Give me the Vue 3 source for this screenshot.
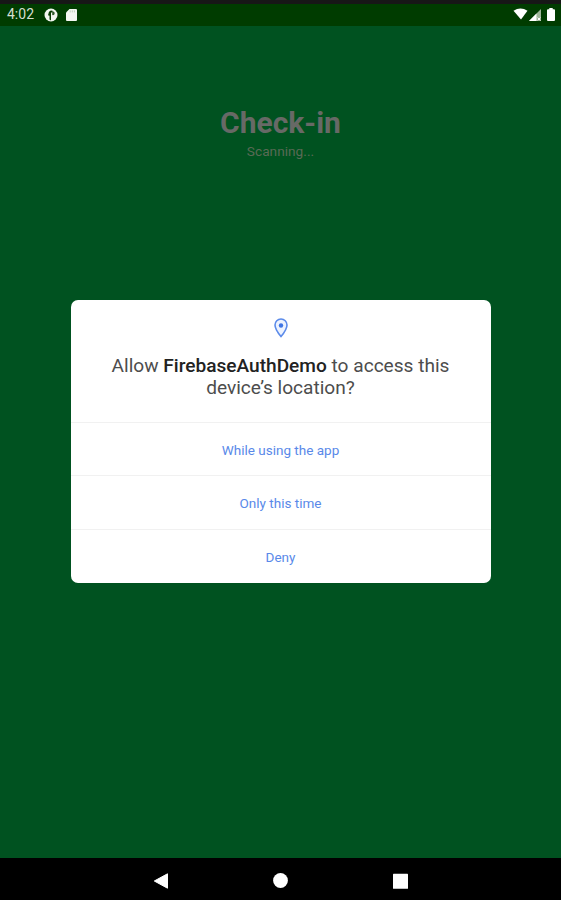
<template>
  <div class="screen">
    <header class="status-bar">
      <div class="status-left">
        <span class="clock">4:02</span>
        <svg class="app-icon" width="14" height="14" viewBox="0 0 14 14">
          <circle cx="7" cy="7" r="6.5" fill="#f4f7f2" />
          <path d="M6.8 2.6 5 3.8 4 7.200l1.500.6v3.800l1.500.8V4.600h1.600V2.800z" fill="#0b3d05" />
          <path d="M8.200 3.400h1.200q1.500.4 1.300 2T9 7.200l-.8-.3z" fill="#33592d" />
        </svg>
        <svg width="11" height="12" viewBox="0 0 11 12">
          <path d="M3.500 0H10q1 0 1 1v10q0 1-1 1H1q-1 0-1-1V3.500z" fill="#f4f7f2" />
          <path d="M4.200 1.400v2M6.300 1.400v2M8.400 1.400v2" stroke="#b5c6b0" stroke-width=".8" />
        </svg>
      </div>
      <div class="status-right">
        <svg width="15" height="12" viewBox="0 0 15 12">
          <path d="M.5 2.700Q7.500-1.700 14.500 2.700L8 11.500z" fill="#fff" />
        </svg>
        <svg class="signal" width="12" height="12" viewBox="0 0 12 12">
          <path d="M12 0v12H0z" fill="#9fb59a" />
          <path d="M7.500 4.500V12H0z" fill="#fff" />
          <path d="m8.700 8.600 2.600 2.800m0-2.800-2.600 2.800" stroke="#fff" />
        </svg>
        <svg width="8" height="13" viewBox="0 0 8 13">
          <path d="M2.300 0h3.400v1.300H7q1 0 1 1V12q0 1-1 1H1q-1 0-1-1V2.300q0-1 1-1h1.300z" fill="#fff" />
        </svg>
      </div>
    </header>

    <main class="content">
      <h1>Check-in</h1>
      <p class="scanning">Scanning...</p>

      <section class="dialog" role="dialog">
        <div class="dialog-head">
          <svg class="pin" width="14" height="20" viewBox="0 0 14 20">
            <path
              d="M7 1a6 6 0 0 0-6 6c0 4.300 6 11.600 6 11.600S13 11.300 13 7a6 6 0 0 0-6-6z"
              fill="#edf3ff"
              stroke="#5c8bea"
              stroke-width="1.600"
            />
            <circle cx="7" cy="7.500" r="2.200" fill="#3f75e4" />
          </svg>
          <h2>
            Allow <b>{{ appName }}</b> to access this<br />device’s location?
          </h2>
        </div>
        <button v-for="option in options" :key="option" type="button">{{ option }}</button>
      </section>
    </main>

    <nav class="nav-bar">
      <svg width="15" height="16" viewBox="0 0 15 16">
        <path d="M14.500.8v14.400L1.300 8z" fill="#fff" stroke="#fff" stroke-linejoin="round" />
      </svg>
      <svg width="15" height="16" viewBox="0 0 15 16">
        <circle cx="7.500" cy="7.500" r="7.400" fill="#fff" />
      </svg>
      <svg width="15" height="16" viewBox="0 0 15 16">
        <rect y=".8" width="15" height="15" rx=".6" fill="#fff" />
      </svg>
    </nav>
  </div>
</template>

<script setup>
const appName = 'FirebaseAuthDemo'
const options = ['While using the app', 'Only this time', 'Deny']
</script>

<style>
body {
  margin: 0;
}
</style>

<style scoped>
.screen {
  display: flex;
  flex-direction: column;
  width: 561px;
  height: 900px;
  overflow: hidden;
  background: #005220;
  font-family: Roboto, 'Liberation Sans', sans-serif;
}

svg {
  display: block;
  flex: none;
}

.status-bar {
  box-sizing: border-box;
  display: flex;
  justify-content: space-between;
  height: 26px;
  padding: 0 6px 0 7px;
  border-top: 4px solid #171717;
  background: #003c00;
}

.status-left,
.status-right {
  display: flex;
  align-items: center;
  height: 21px;
}

.status-right {
  height: 20px;
}

.clock {
  width: 37px;
  color: #d5dfd2;
  font-size: 14px;
  line-height: 21px;
}

.app-icon {
  margin-right: 8px;
}

.signal {
  margin: 1px 6px 0 1px;
}

.content {
  display: flex;
  flex: 1;
  flex-direction: column;
  align-items: center;
}

h1 {
  margin: 78px 0 0;
  color: #676966;
  font-size: 30px;
  font-weight: 700;
  line-height: 38px;
}

.scanning {
  margin: 0;
  color: #596a55;
  font-size: 13.7px;
  line-height: 18px;
}

.dialog {
  width: 420px;
  height: 283px;
  margin-top: 140px;
  overflow: hidden;
  border-radius: 7px;
  background: #fff;
}

.dialog-head {
  display: flex;
  flex-direction: column;
  align-items: center;
  height: 121.5px;
}

.pin {
  margin-top: 18px;
}

h2 {
  margin: 17px 0 0;
  color: #4d4d4d;
  font-size: 19.1px;
  font-weight: 400;
  line-height: 22px;
  text-align: center;
  white-space: nowrap;
}

h2 b {
  color: #222;
  font-weight: 500;
}

button {
  display: block;
  box-sizing: border-box;
  width: 100%;
  height: 53.5px;
  padding: 2px 0 0;
  border: 0;
  border-top: 1px solid #f1f1f1;
  background: none;
  color: #5989e9;
  font: 400 13.5px Roboto, 'Liberation Sans', sans-serif;
}

.nav-bar {
  box-sizing: border-box;
  display: flex;
  align-items: center;
  justify-content: center;
  gap: 105px;
  height: 42px;
  padding-top: 4px;
  background: #000;
}
</style>
